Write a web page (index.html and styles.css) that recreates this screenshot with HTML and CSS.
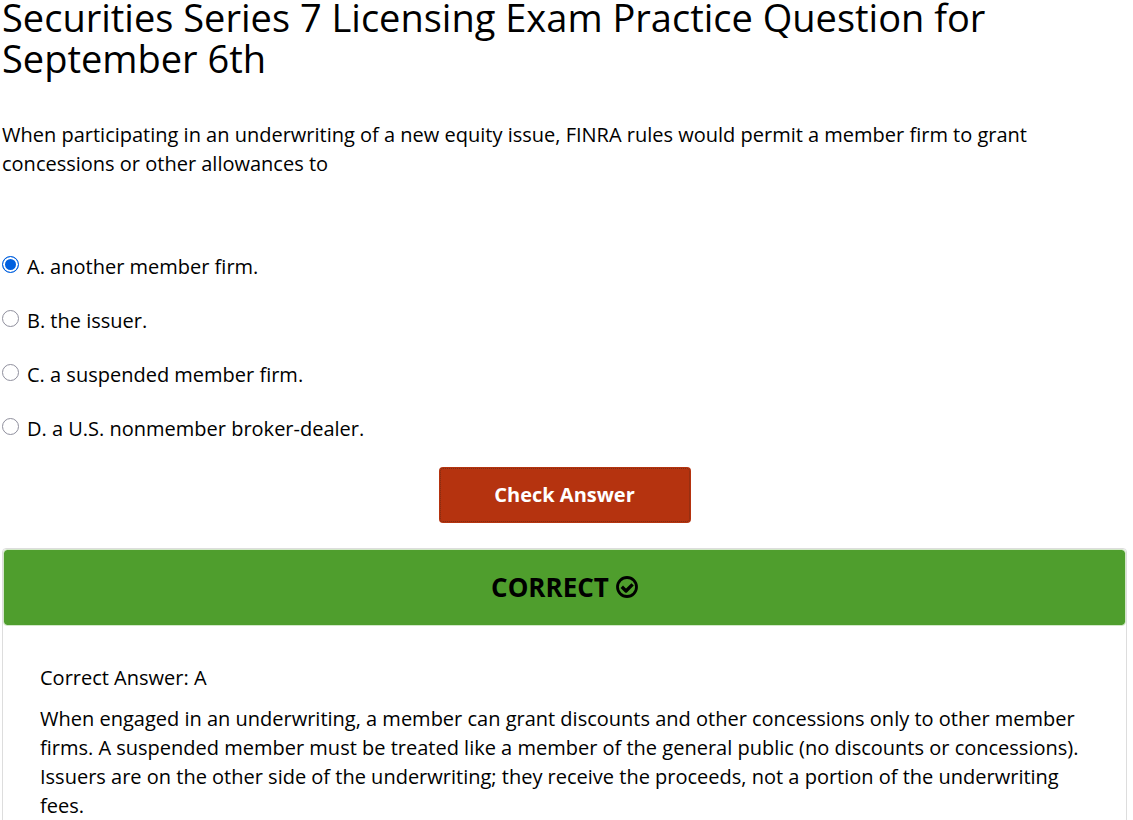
FILE: index.html
```html
<!DOCTYPE html>
<html lang="en">
<head>
<meta charset="utf-8">
<title>Practice Question</title>
<link rel="stylesheet" href="styles.css">
</head>
<body>
<main class="page">
  <h1 class="title">Securities Series 7 Licensing Exam Practice Question for September 6th</h1>
  <p class="question">When participating in an underwriting of a new equity issue, FINRA rules would permit a member firm to grant concessions or other allowances to</p>
  <form class="quiz">
    <div class="options">
      <label class="option"><input class="radio" type="radio" name="answer" checked><span>A. another member firm.</span></label>
      <label class="option"><input class="radio" type="radio" name="answer"><span>B. the issuer.</span></label>
      <label class="option"><input class="radio" type="radio" name="answer"><span>C. a suspended member firm.</span></label>
      <label class="option"><input class="radio" type="radio" name="answer"><span>D. a U.S. nonmember broker-dealer.</span></label>
    </div>
    <button class="check" type="button">Check Answer</button>
  </form>
  <section class="result">
    <h2 class="banner">CORRECT
      <svg class="tick" viewBox="0 0 22 22" aria-hidden="true"><circle cx="11" cy="11" r="9.5" fill="none" stroke="currentColor" stroke-width="2.8"/><path d="M5.8 10.8l4.2 4.2 6.6-6.6" fill="none" stroke="currentColor" stroke-width="3.4" stroke-linejoin="round"/></svg>
    </h2>
    <div class="explanation">
      <p>Correct Answer: A</p>
      <p>When engaged in an underwriting, a member can grant discounts and other concessions only to other member firms. A suspended member must be treated like a member of the general public (no discounts or concessions). Issuers are on the other side of the underwriting; they receive the proceeds, not a portion of the underwriting fees.</p>
    </div>
  </section>
</main>
</body>
</html>
```
FILE: styles.css
```css
* { box-sizing: border-box; }
html { scrollbar-width: none; }
body { margin: 0; background: #fff; color: #000; font: 20px/29px "Open Sans", "Noto Sans", sans-serif; }
.page { padding: 0 6px 0 2px; display: flow-root; }
.title { margin: -3px 0 0; font-size: 38px; line-height: 41px; font-weight: 400; }
.question { margin: 41px 0 0; }
.options { display: flex; flex-direction: column; align-items: flex-start; gap: 25px; margin-top: 74px; }
.option { display: flex; gap: 8px; }
.radio { appearance: none; width: 17px; height: 17px; margin: 4px 0 0; border: 1px solid #8f8f9d; border-radius: 50%; background: #fff; }
.radio:checked { border-color: #0060df; background: #0060df; box-shadow: inset 0 0 0 2px #fff; }
.check { display: block; width: 252px; height: 56px; margin: 24px auto 0; padding: 0 0 2px; border: 0; border-radius: 4px; outline: 1px dotted #7d2c14; outline-offset: -2px; background: #b5330f; color: #fff; font: 700 20px/29px "Open Sans", sans-serif; }
.result { margin-top: 25px; border: 1px solid #ddd; border-radius: 4px; }
.banner { display: flex; align-items: center; justify-content: center; gap: 7px; height: 77px; margin: 0; padding-bottom: 2px; border: 1px solid #d2e8c8; border-radius: 4px; background: #4f9e2d; background-clip: padding-box; font-size: 26px; line-height: 36px; }
.tick { width: 22px; height: 22px; }
.explanation { padding: 37px; }
.explanation p { margin: 0 0 12px; }
.explanation p:last-child { margin: 0; }
```
